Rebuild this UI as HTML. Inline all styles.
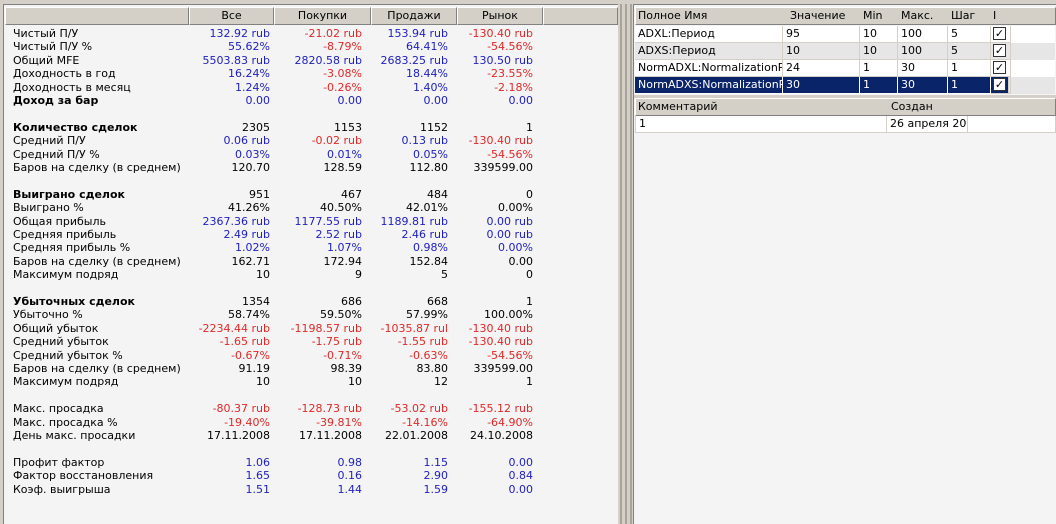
<!DOCTYPE html>
<html><head><meta charset="utf-8"><style>
*{margin:0;padding:0;box-sizing:border-box}
body{width:1056px;height:522px;background:#d4d0c8;font-family:Tahoma,"DejaVu Sans","Liberation Sans",sans-serif;font-size:11px;color:#000;position:relative;overflow:hidden}
.pl{position:absolute;left:3px;top:4px;width:615px;height:520px;background:#f4f4f4;border-left:1px solid #808080;border-top:1px solid #808080}
.pr{position:absolute;left:633px;top:4px;width:423px;height:520px;background:#f4f4f4;border-left:1px solid #808080;border-top:1px solid #808080}
.h{position:absolute;top:2px;height:18px;background:#d4d0c8;border-right:1px solid #808080;border-bottom:1px solid #808080;border-top:1px solid #fff;border-left:1px solid #fff;line-height:16px;text-align:center}
.row{position:absolute;left:0;width:610px;height:13px;line-height:13px}
.row span{position:absolute;white-space:nowrap}
.l{left:9px}
.a{right:344px}.b{right:252px}.c{right:166px}.d{right:81px}
.B{color:#2020c0}.R{color:#e02828}.bo{font-weight:bold}
.sp{position:absolute;top:4px;width:2px;height:520px;background:#a8a49c}
.g{position:absolute;left:1px;height:17px;line-height:16px;white-space:nowrap}
.g span{position:absolute;top:0;height:17px;padding-left:3px;border-right:1px solid #d4d0c8;border-bottom:1px solid #d4d0c8;overflow:hidden}
.cb{display:inline-block;width:13px;height:13px;border:1px solid #333;background:#fff;margin-top:1px;font-size:11px;font-weight:bold;line-height:11px;text-align:center;color:#000;font-style:normal}
</style></head><body>
<div class="pl">
<div class="h" style="left:1px;width:184px"></div>
<div class="h" style="left:185px;width:85px">Все</div>
<div class="h" style="left:270px;width:97px">Покупки</div>
<div class="h" style="left:367px;width:86px">Продажи</div>
<div class="h" style="left:453px;width:86px">Рынок</div>
<div class="h" style="left:539px;width:75px"></div>
<div class="row" style="top:22px"><span class="l">Чистый П/У</span><span class="a B">132.92 rub</span><span class="b R">-21.02 rub</span><span class="c B">153.94 rub</span><span class="d R">-130.40 rub</span></div>
<div class="row" style="top:35.4px"><span class="l">Чистый П/У %</span><span class="a B">55.62%</span><span class="b R">-8.79%</span><span class="c B">64.41%</span><span class="d R">-54.56%</span></div>
<div class="row" style="top:48.8px"><span class="l">Общий MFE</span><span class="a B">5503.83 rub</span><span class="b B">2820.58 rub</span><span class="c B">2683.25 rub</span><span class="d B">130.50 rub</span></div>
<div class="row" style="top:62.2px"><span class="l">Доходность в год</span><span class="a B">16.24%</span><span class="b R">-3.08%</span><span class="c B">18.44%</span><span class="d R">-23.55%</span></div>
<div class="row" style="top:75.6px"><span class="l">Доходность в месяц</span><span class="a B">1.24%</span><span class="b R">-0.26%</span><span class="c B">1.40%</span><span class="d R">-2.18%</span></div>
<div class="row" style="top:89px"><span class="l bo">Доход за бар</span><span class="a B">0.00</span><span class="b B">0.00</span><span class="c B">0.00</span><span class="d B">0.00</span></div>
<div class="row" style="top:115.8px"><span class="l bo">Количество сделок</span><span class="a">2305</span><span class="b">1153</span><span class="c">1152</span><span class="d">1</span></div>
<div class="row" style="top:129.2px"><span class="l">Средний П/У</span><span class="a B">0.06 rub</span><span class="b R">-0.02 rub</span><span class="c B">0.13 rub</span><span class="d R">-130.40 rub</span></div>
<div class="row" style="top:142.6px"><span class="l">Средний П/У %</span><span class="a B">0.03%</span><span class="b B">0.01%</span><span class="c B">0.05%</span><span class="d R">-54.56%</span></div>
<div class="row" style="top:156px"><span class="l">Баров на сделку (в среднем)</span><span class="a">120.70</span><span class="b">128.59</span><span class="c">112.80</span><span class="d">339599.00</span></div>
<div class="row" style="top:182.8px"><span class="l bo">Выиграно сделок</span><span class="a">951</span><span class="b">467</span><span class="c">484</span><span class="d">0</span></div>
<div class="row" style="top:196.2px"><span class="l">Выиграно %</span><span class="a">41.26%</span><span class="b">40.50%</span><span class="c">42.01%</span><span class="d">0.00%</span></div>
<div class="row" style="top:209.6px"><span class="l">Общая прибыль</span><span class="a B">2367.36 rub</span><span class="b B">1177.55 rub</span><span class="c B">1189.81 rub</span><span class="d B">0.00 rub</span></div>
<div class="row" style="top:223px"><span class="l">Средняя прибыль</span><span class="a B">2.49 rub</span><span class="b B">2.52 rub</span><span class="c B">2.46 rub</span><span class="d B">0.00 rub</span></div>
<div class="row" style="top:236.4px"><span class="l">Средняя прибыль %</span><span class="a B">1.02%</span><span class="b B">1.07%</span><span class="c B">0.98%</span><span class="d B">0.00%</span></div>
<div class="row" style="top:249.8px"><span class="l">Баров на сделку (в среднем)</span><span class="a">162.71</span><span class="b">172.94</span><span class="c">152.84</span><span class="d">0.00</span></div>
<div class="row" style="top:263.2px"><span class="l">Максимум подряд</span><span class="a">10</span><span class="b">9</span><span class="c">5</span><span class="d">0</span></div>
<div class="row" style="top:290px"><span class="l bo">Убыточных сделок</span><span class="a">1354</span><span class="b">686</span><span class="c">668</span><span class="d">1</span></div>
<div class="row" style="top:303.4px"><span class="l">Убыточно %</span><span class="a">58.74%</span><span class="b">59.50%</span><span class="c">57.99%</span><span class="d">100.00%</span></div>
<div class="row" style="top:316.8px"><span class="l">Общий убыток</span><span class="a R">-2234.44 rub</span><span class="b R">-1198.57 rub</span><span class="c R">-1035.87 rul</span><span class="d R">-130.40 rub</span></div>
<div class="row" style="top:330.2px"><span class="l">Средний убыток</span><span class="a R">-1.65 rub</span><span class="b R">-1.75 rub</span><span class="c R">-1.55 rub</span><span class="d R">-130.40 rub</span></div>
<div class="row" style="top:343.6px"><span class="l">Средний убыток %</span><span class="a R">-0.67%</span><span class="b R">-0.71%</span><span class="c R">-0.63%</span><span class="d R">-54.56%</span></div>
<div class="row" style="top:357px"><span class="l">Баров на сделку (в среднем)</span><span class="a">91.19</span><span class="b">98.39</span><span class="c">83.80</span><span class="d">339599.00</span></div>
<div class="row" style="top:370.4px"><span class="l">Максимум подряд</span><span class="a">10</span><span class="b">10</span><span class="c">12</span><span class="d">1</span></div>
<div class="row" style="top:397.2px"><span class="l">Макс. просадка</span><span class="a R">-80.37 rub</span><span class="b R">-128.73 rub</span><span class="c R">-53.02 rub</span><span class="d R">-155.12 rub</span></div>
<div class="row" style="top:410.6px"><span class="l">Макс. просадка %</span><span class="a R">-19.40%</span><span class="b R">-39.81%</span><span class="c R">-14.16%</span><span class="d R">-64.90%</span></div>
<div class="row" style="top:424px"><span class="l">День макс. просадки</span><span class="a">17.11.2008</span><span class="b">17.11.2008</span><span class="c">22.01.2008</span><span class="d">24.10.2008</span></div>
<div class="row" style="top:450.8px"><span class="l">Профит фактор</span><span class="a B">1.06</span><span class="b B">0.98</span><span class="c B">1.15</span><span class="d B">0.00</span></div>
<div class="row" style="top:464.2px"><span class="l">Фактор восстановления</span><span class="a B">1.65</span><span class="b B">0.16</span><span class="c B">2.90</span><span class="d B">0.84</span></div>
<div class="row" style="top:477.6px"><span class="l">Коэф. выигрыша</span><span class="a B">1.51</span><span class="b B">1.44</span><span class="c B">1.59</span><span class="d B">0.00</span></div>
</div>
<div class="sp" style="left:620px"></div>
<div class="sp" style="left:625px"></div>
<div class="sp" style="left:630px"></div>
<div class="pr">
<div class="h" style="left:1px;width:421px;text-align:left"></div>
<div class="g" style="top:3px;width:420px"><span style="left:0;width:148px;border:0">Полное Имя</span><span style="left:152px;width:72px;border:0">Значение</span><span style="left:225px;width:38px;border:0">Min</span><span style="left:263px;width:50px;border:0">Макс.</span><span style="left:313px;width:43px;border:0">Шаг</span><span style="left:355px;width:15px;border:0">I</span></div>
<div class="g" style="top:21px;width:420px;background:#fff"><span style="left:0;width:148px">ADXL:Период</span><span style="left:148px;width:77px">95</span><span style="left:225px;width:38px">10</span><span style="left:263px;width:50px">100</span><span style="left:313px;width:43px">5</span><span style="left:356px;width:20px;padding-left:2px"><i class="cb">✓</i></span></div>
<div class="g" style="top:38px;width:420px;background:#e6e6e6"><span style="left:0;width:148px">ADXS:Период</span><span style="left:148px;width:77px">10</span><span style="left:225px;width:38px">10</span><span style="left:263px;width:50px">100</span><span style="left:313px;width:43px">5</span><span style="left:356px;width:20px;padding-left:2px"><i class="cb">✓</i></span></div>
<div class="g" style="top:55px;width:420px;background:#fff"><span style="left:0;width:148px">NormADXL:NormalizationP</span><span style="left:148px;width:77px">24</span><span style="left:225px;width:38px">1</span><span style="left:263px;width:50px">30</span><span style="left:313px;width:43px">1</span><span style="left:356px;width:20px;padding-left:2px"><i class="cb">✓</i></span></div>
<div class="g" style="top:72px;width:420px;background:#e6e6e6"><span style="left:0;width:374px;background:#0a246a;padding:0"></span><span style="left:0;width:148px;color:#fff;border-color:#fff">NormADXS:NormalizationP</span><span style="left:148px;width:77px;color:#fff;border-color:#fff">30</span><span style="left:225px;width:38px;color:#fff;border-color:#fff">1</span><span style="left:263px;width:50px;color:#fff;border-color:#fff">30</span><span style="left:313px;width:43px;color:#fff;border-color:#fff">1</span><span style="left:356px;width:20px;padding-left:2px"><i class="cb">✓</i></span></div>
<div style="position:absolute;left:0;top:90px;width:423px;height:3px;background:#d4d0c8"></div>
<div class="h" style="left:1px;top:93px;width:421px"></div>
<div class="g" style="top:94px;width:420px"><span style="left:0;width:250px;border:0">Комментарий</span><span style="left:253px;width:80px;border:0">Создан</span></div>
<div class="g" style="top:111px;width:420px;background:#fff"><span style="left:0;width:252px;border-left:1px solid #d4d0c8">1</span><span style="left:252px;width:81px">26 апреля 20</span><span style="left:333px;width:88px"></span></div>
</div>
</body></html>
